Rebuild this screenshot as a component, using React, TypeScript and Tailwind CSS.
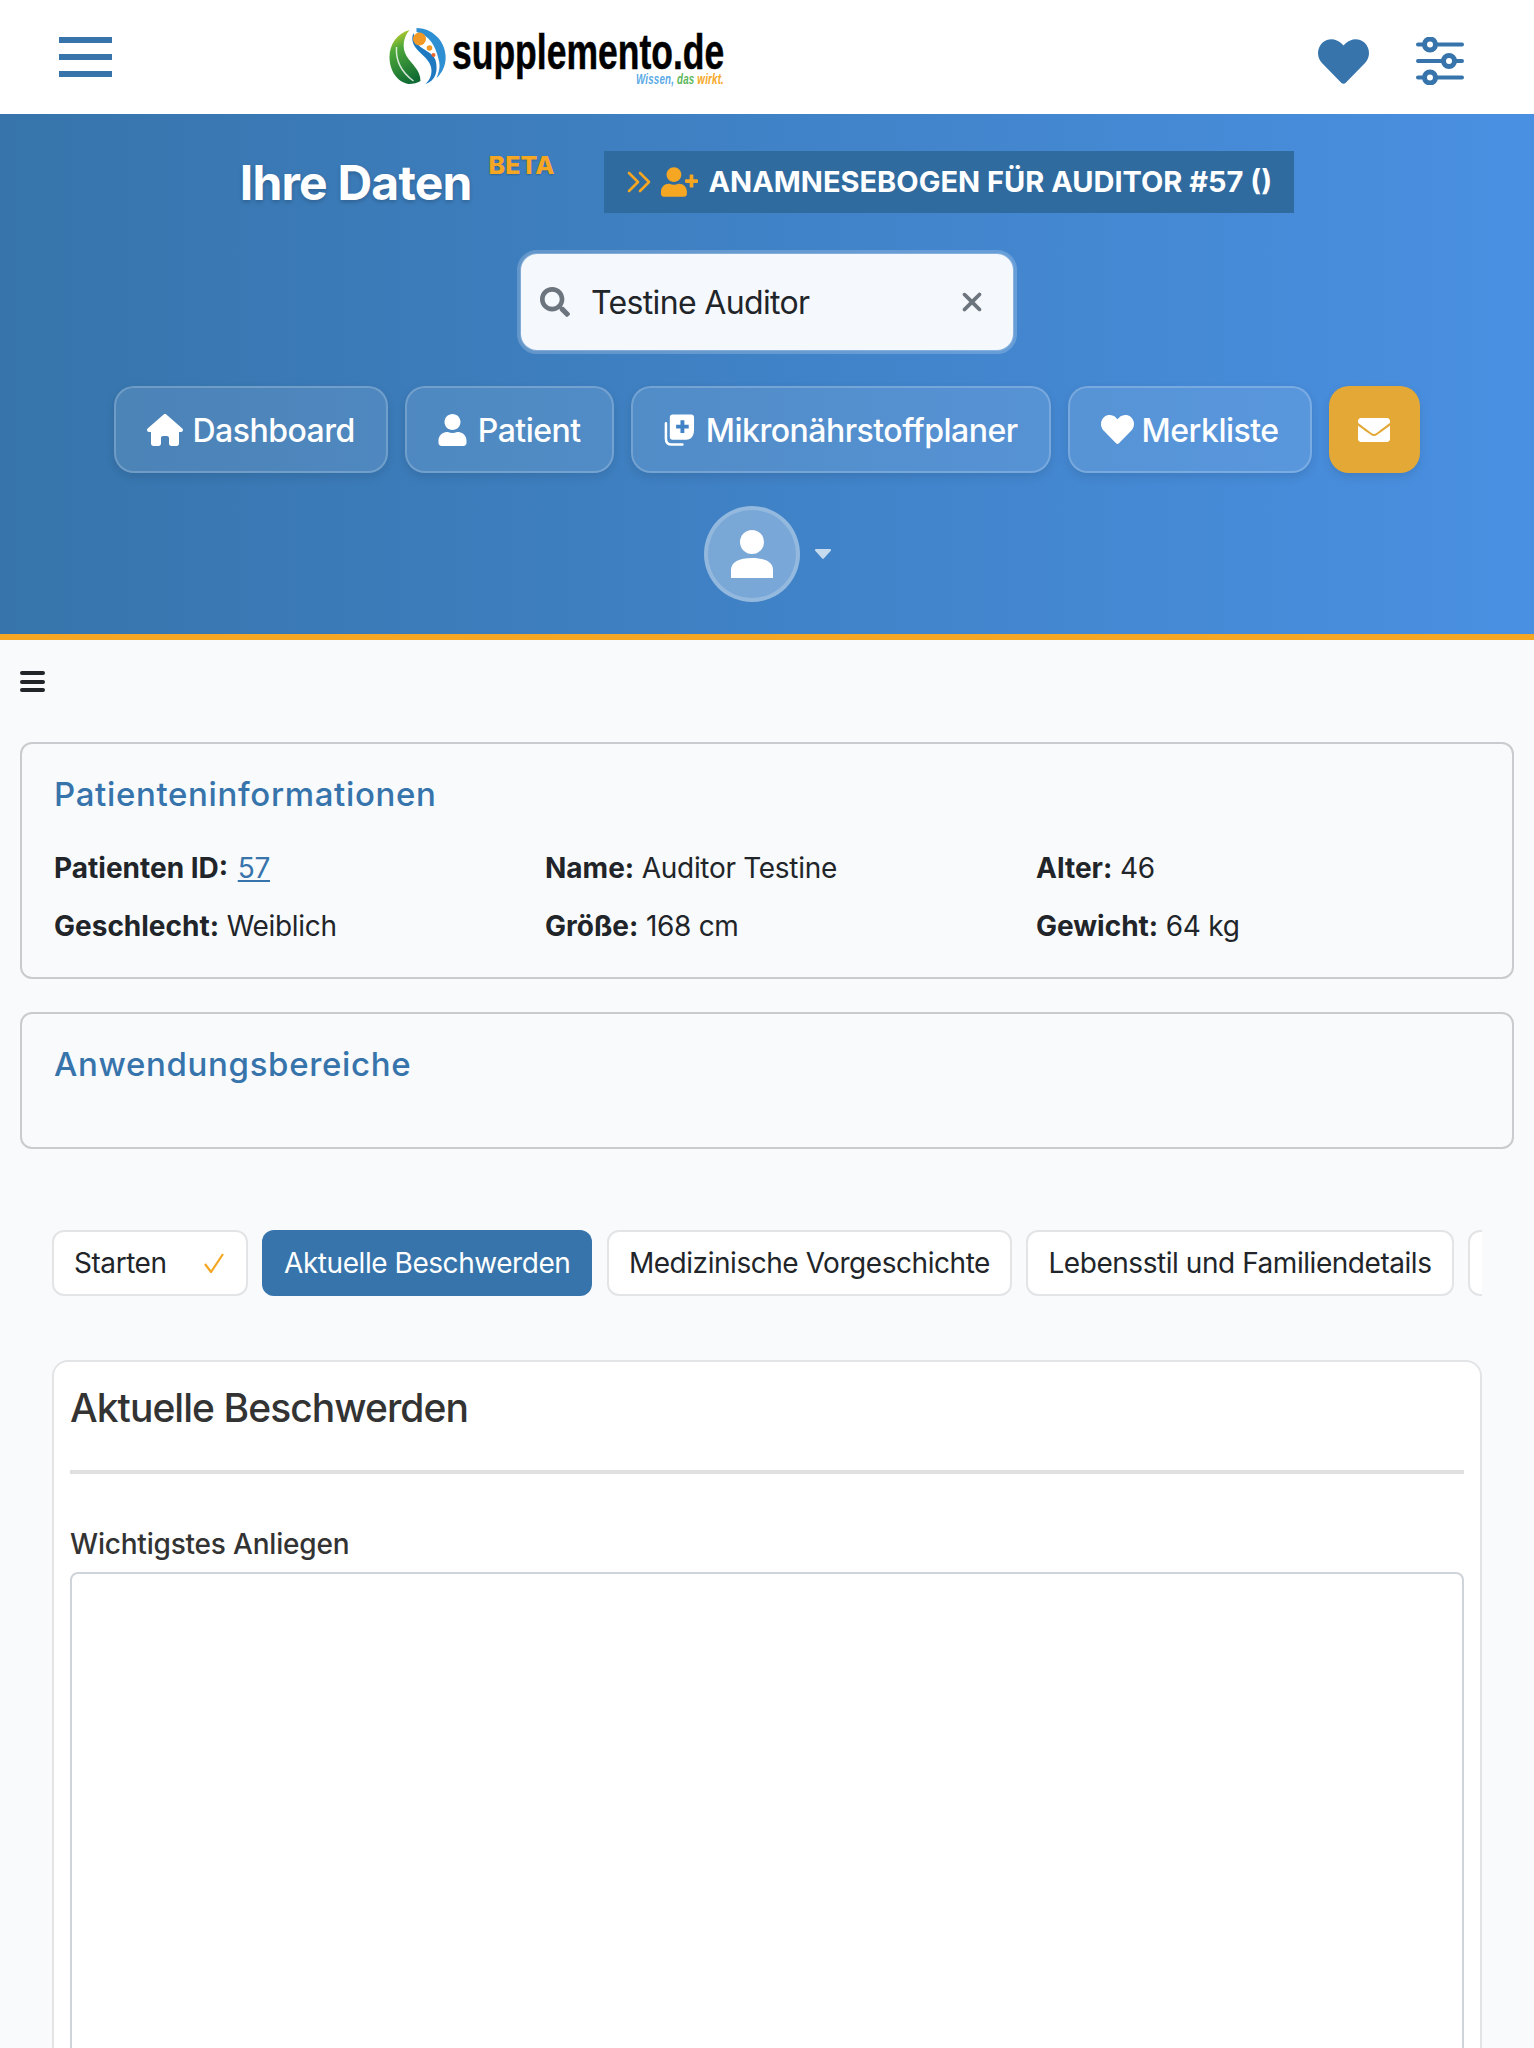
import React from 'react';
import { FaHeart, FaUser, FaUserPlus, FaEnvelope, FaSearch } from 'react-icons/fa';
import { FaHouse, FaXmark } from 'react-icons/fa6';

function LogoMark() {
  return (
    <svg viewBox="0 0 56 58" className="w-[57px] h-[58px] shrink-0">
      <defs>
        <linearGradient id="leaf" x1="0.3" y1="0" x2="0.6" y2="1">
          <stop offset="0" stopColor="#c3cf2b" />
          <stop offset="0.3" stopColor="#4ea83a" />
          <stop offset="1" stopColor="#0f6a33" />
        </linearGradient>
      </defs>
      <ellipse cx="28" cy="29" rx="28" ry="29" fill="#fff" />
      <path d="M20 3C8 6 0 17 0 30c0 14 8 25 19 27 5 0 9-1 12-3C31 43 22 37 17 29 12 20 14 10 20 3z" fill="url(#leaf)" />
      <path d="M7 20c-1 14 6 26 17 34" stroke="#fff" strokeWidth="1.500" fill="none" opacity="0.8" />
      <path d="M26 1c16-1 29 12 30 27 1 13-7 25-20 29 6-6 8-13 6-20-2-8-11-13-16-20-4-5-4-11 0-16z" fill="#fff" />
      <path d="M27 1c15 0 28 12 29 27 1 9-3 18-9 23 3-7 4-13 2-19C46 19 40 8 27 5z" fill="#2f8fd3" />
      <path d="M24 6c-3 7 0 13 5 18 6 6 13 11 13 20 0 5-2 9-6 13 10-3 13-13 10-24-3-8-13-10-17-15-3-3-4-8-5-12z" fill="#1f79c0" />
      <circle cx="30" cy="12" r="6.500" fill="#f39a26" />
      <circle cx="40" cy="21" r="2.800" fill="#f39a26" />
      <circle cx="44" cy="28" r="2" fill="#e9672c" />
    </svg>
  );
}

function SlidersIcon() {
  return (
    <svg viewBox="0 0 48 48" className="w-12 h-12 ml-[47px]" fill="none" stroke="#3674ab" strokeLinecap="round">
      <path strokeWidth="4" d="M2 7.500h6M20 7.500h26M2 24h25M39 24h7M2 40.500h6M20 40.500h26" />
      <circle strokeWidth="5" cx="14" cy="7.500" r="5.500" />
      <circle strokeWidth="5" cx="33" cy="24" r="5.500" />
      <circle strokeWidth="5" cx="14" cy="40.500" r="5.500" />
    </svg>
  );
}

function MedicalIcon() {
  return (
    <svg viewBox="0 0 32 32" className="w-[31px] h-8 mr-[11px]" fill="none">
      <path d="M2 9v16c0 4 2 6 6 6h11" stroke="#fff" strokeWidth="2.600" strokeLinecap="round" />
      <path d="M9 0h19a3 3 0 0 1 3 3v13c0 6-3 10-8 10H9a3 3 0 0 1-3-3V3a3 3 0 0 1 3-3z" fill="#fff" />
      <path d="M17 6h4v4.500h4.500v4H21V19h-4v-4.500h-4.500v-4H17z" fill="#3f82c6" />
    </svg>
  );
}

const navBtn =
  'flex items-center h-[87px] px-[31px] rounded-[20px] border-2 border-white/20 bg-white/10 shadow-[0_4px_10px_rgba(0,0,0,0.1)] text-white text-[32px] font-medium tracking-[-0.5px]';

const tabBtn =
  'h-[66px] shrink-0 flex items-center px-[20px] rounded-xl border-2 border-[#e3e4e6] bg-white text-[#212529] text-[28px] tracking-[-0.45px]';

export default function App() {
  return (
    <div className="w-[1534px] h-[2048px] overflow-hidden bg-slate-50 font-['Inter',sans-serif]">
      <header className="h-[114px] bg-white flex items-center pl-[59px] pr-[70px]">
        <div className="w-[53px] flex flex-col gap-[11px] -mt-[1px]">
          <div className="h-[6px] bg-[#3674ab]" />
          <div className="h-[6px] bg-[#3674ab]" />
          <div className="h-[6px] bg-[#3674ab]" />
        </div>
        <div className="ml-[277px] flex items-center -mt-[2px]">
          <LogoMark />
          <div className="ml-[6px] w-[272px]">
            <div className="font-['Liberation_Sans'] font-bold text-[50px] leading-[42px] mt-[5px] text-black whitespace-nowrap origin-left scale-x-[0.71] [-webkit-text-stroke:0.5px_black]">
              supplemento.de
            </div>
            <div className="font-['Liberation_Sans'] italic font-bold text-[15px] leading-[14px] -mt-[1px] text-right whitespace-nowrap origin-right scale-x-[0.65] tracking-[0.3px]">
              <span className="text-[#5aa9e6]">Wissen, </span>
              <span className="text-[#5cb85c]">das </span>
              <span className="text-[#f5a623]">wirkt.</span>
            </div>
          </div>
        </div>
        <div className="ml-auto flex items-center mt-[7px]">
          <FaHeart className="w-[51px] h-[51px] mt-[2px] text-[#3674ab]" />
          <SlidersIcon />
        </div>
      </header>

      <section className="h-[526px] border-b-[6px] border-[#f5a623] bg-gradient-to-r from-[#3674ab] to-[#4a90e2] flex flex-col items-center pt-[37px]">
        <div className="flex items-start">
          <h1 className="text-[48px] leading-[62px] mt-[1px] -mb-[1px] font-bold text-white tracking-[-0.8px] [text-shadow:0_2px_4px_rgba(0,0,0,0.2)]">
            Ihre Daten
          </h1>
          <span className="ml-[17px] text-[25px] leading-[28px] font-extrabold text-[#f5a623] [text-shadow:0_1px_2px_rgba(0,0,0,0.2)]">
            BETA
          </span>
          <div className="ml-[50px] h-[62px] flex items-center bg-[#306b9f] pl-[23px] pr-[22px]">
            <svg viewBox="0 0 24 22" className="w-6 h-[22px]" fill="none" stroke="#f5a623" strokeWidth="2.600" strokeLinecap="round" strokeLinejoin="round">
              <path d="M2 2l9 9-9 9M13 2l9 9-9 9" />
            </svg>
            <FaUserPlus className="w-[37px] h-[30px] ml-[10px] text-[#f5a623]" />
            <span className="ml-[10px] text-[29px] font-bold text-white whitespace-nowrap uppercase">
              Anamnesebogen für Auditor #57 ()
            </span>
          </div>
        </div>

        <div className="mt-[37px] w-[500px] h-[104px] rounded-[20px] border-4 border-white/20 bg-clip-padding">
          <div className="h-full rounded-2xl bg-[#f5f8fd] flex items-center pl-[19px] pr-[26px] shadow-[0_0_0_1px_rgba(255,255,255,0.2)]">
            <FaSearch className="w-[30px] h-[30px] text-[#6c757d]" />
            <span className="ml-[21px] pt-[2px] text-[32px] tracking-[-0.65px] text-[#212529]">Testine Auditor</span>
            <FaXmark className="ml-auto w-[30px] h-[30px] text-[#6c757d]" />
          </div>
        </div>

        <nav className="mt-[32px] flex justify-center gap-[17px]">
          <div className={navBtn}>
            <FaHouse className="w-9 h-8 mr-[9px]" />
            <span className="pt-[2px]">Dashboard</span>
          </div>
          <div className={navBtn}>
            <FaUser className="w-[29px] h-8 mr-[11px]" />
            <span className="pt-[2px]">Patient</span>
          </div>
          <div className={navBtn}>
            <MedicalIcon />
            <span className="pt-[2px]">Mikronährstoffplaner</span>
          </div>
          <div className={navBtn}>
            <FaHeart className="w-[33px] h-[33px] mr-2" />
            <span className="pt-[2px]">Merkliste</span>
          </div>
          <div className="w-[91px] h-[87px] flex items-center justify-center rounded-[20px] bg-[#e3a835] shadow-[0_4px_10px_rgba(0,0,0,0.1)]">
            <FaEnvelope className="w-8 h-8 text-white" />
          </div>
        </nav>

        <div className="mt-[33px] flex items-center">
          <div className="w-[96px] h-[96px] rounded-full border-4 border-white/20 bg-white/30 flex items-center justify-center">
            <svg viewBox="0 0 42 48" className="w-[42px] h-[48px]" fill="#fff">
              <ellipse cx="21" cy="12" rx="12" ry="12" />
              <path d="M0 48v-8c0-8 8-12 21-12s21 4 21 12v8z" />
            </svg>
          </div>
          <svg viewBox="0 0 16 10" className="ml-[15px] w-4 h-[10px]" fill="#fff" opacity="0.7">
            <path d="M1 0h14c1 0 1.500 1 .8 1.700L8.800 9.500c-.4.500-1.200.500-1.600 0L.2 1.700C-.5 1 0 0 1 0z" />
          </svg>
        </div>
      </section>

      <main className="px-5">
        <div className="pt-[31px] h-[102px]">
          <div className="w-[25px] flex flex-col gap-[4.5px]">
            <div className="h-[4px] rounded bg-[#212529]" />
            <div className="h-[4px] rounded bg-[#212529]" />
            <div className="h-[4px] rounded bg-[#212529]" />
          </div>
        </div>

        <div className="h-[237px] rounded-xl border-2 border-[#c9cbce] px-[32px] pt-[26px] text-[28px] text-[#212529] tracking-[-0.3px]">
          <h2 className="text-[33px] leading-[48px] font-medium text-[#3674ab] tracking-[0.65px]">Patienteninformationen</h2>
          <div className="mt-[29px] grid grid-cols-[repeat(3,491px)] gap-y-[16px] leading-[42px]">
            <div><b className="font-bold tracking-normal">Patienten ID:</b> <span className="ml-[2px] text-[#3674ab] underline">57</span></div>
            <div><b className="font-bold tracking-normal">Name:</b> Auditor Testine</div>
            <div><b className="font-bold tracking-normal">Alter:</b> 46</div>
            <div><b className="font-bold tracking-normal">Geschlecht:</b> Weiblich</div>
            <div><b className="font-bold tracking-normal">Größe:</b> 168 cm</div>
            <div><b className="font-bold tracking-normal">Gewicht:</b> 64 kg</div>
          </div>
        </div>

        <div className="mt-[33px] h-[137px] rounded-xl border-2 border-[#c9cbce] px-[32px] pt-[26px]">
          <h2 className="text-[33px] leading-[48px] font-medium text-[#3674ab] tracking-[0.65px]">Anwendungsbereiche</h2>
        </div>

        <div className="mt-[81px] ml-[32px] mr-[32px] flex gap-[14.5px] overflow-hidden">
          <div className={`${tabBtn} pr-[22px]`}>
            Starten
            <svg viewBox="0 0 20 20" className="ml-[37px] w-5 h-5" fill="none" stroke="#f5a623" strokeWidth="2.200">
              <path d="M1 11l6 8L19 1" />
            </svg>
          </div>
          <div className="h-[66px] shrink-0 flex items-center px-[22px] rounded-xl bg-[#3674ab] text-white text-[28px] tracking-[-0.45px]">
            Aktuelle Beschwerden
          </div>
          <div className={tabBtn}>Medizinische Vorgeschichte</div>
          <div className={tabBtn}>Lebensstil und Familiendetails</div>
          <div className="h-[66px] w-[120px] shrink-0 rounded-xl border-2 border-[#e3e4e6] bg-white" />
        </div>

        <div className="mt-[64px] ml-[32px] mr-[32px] h-[800px] rounded-2xl border-2 border-[#e2e4e6] bg-white px-4 pt-[16px]">
          <h3 className="text-[39px] leading-[60px] font-medium text-[#333] tracking-[-0.95px]">Aktuelle Beschwerden</h3>
          <div className="mt-[32px] h-1 bg-[#e0e0e0]" />
          <label className="block mt-[50px] text-[28px] leading-[40px] font-medium text-[#333] tracking-[-0.2px]">Wichtigstes Anliegen</label>
          <div className="mt-[8px] h-[600px] rounded-lg border-2 border-[#ced4da] bg-white" />
        </div>
      </main>
    </div>
  );
}
